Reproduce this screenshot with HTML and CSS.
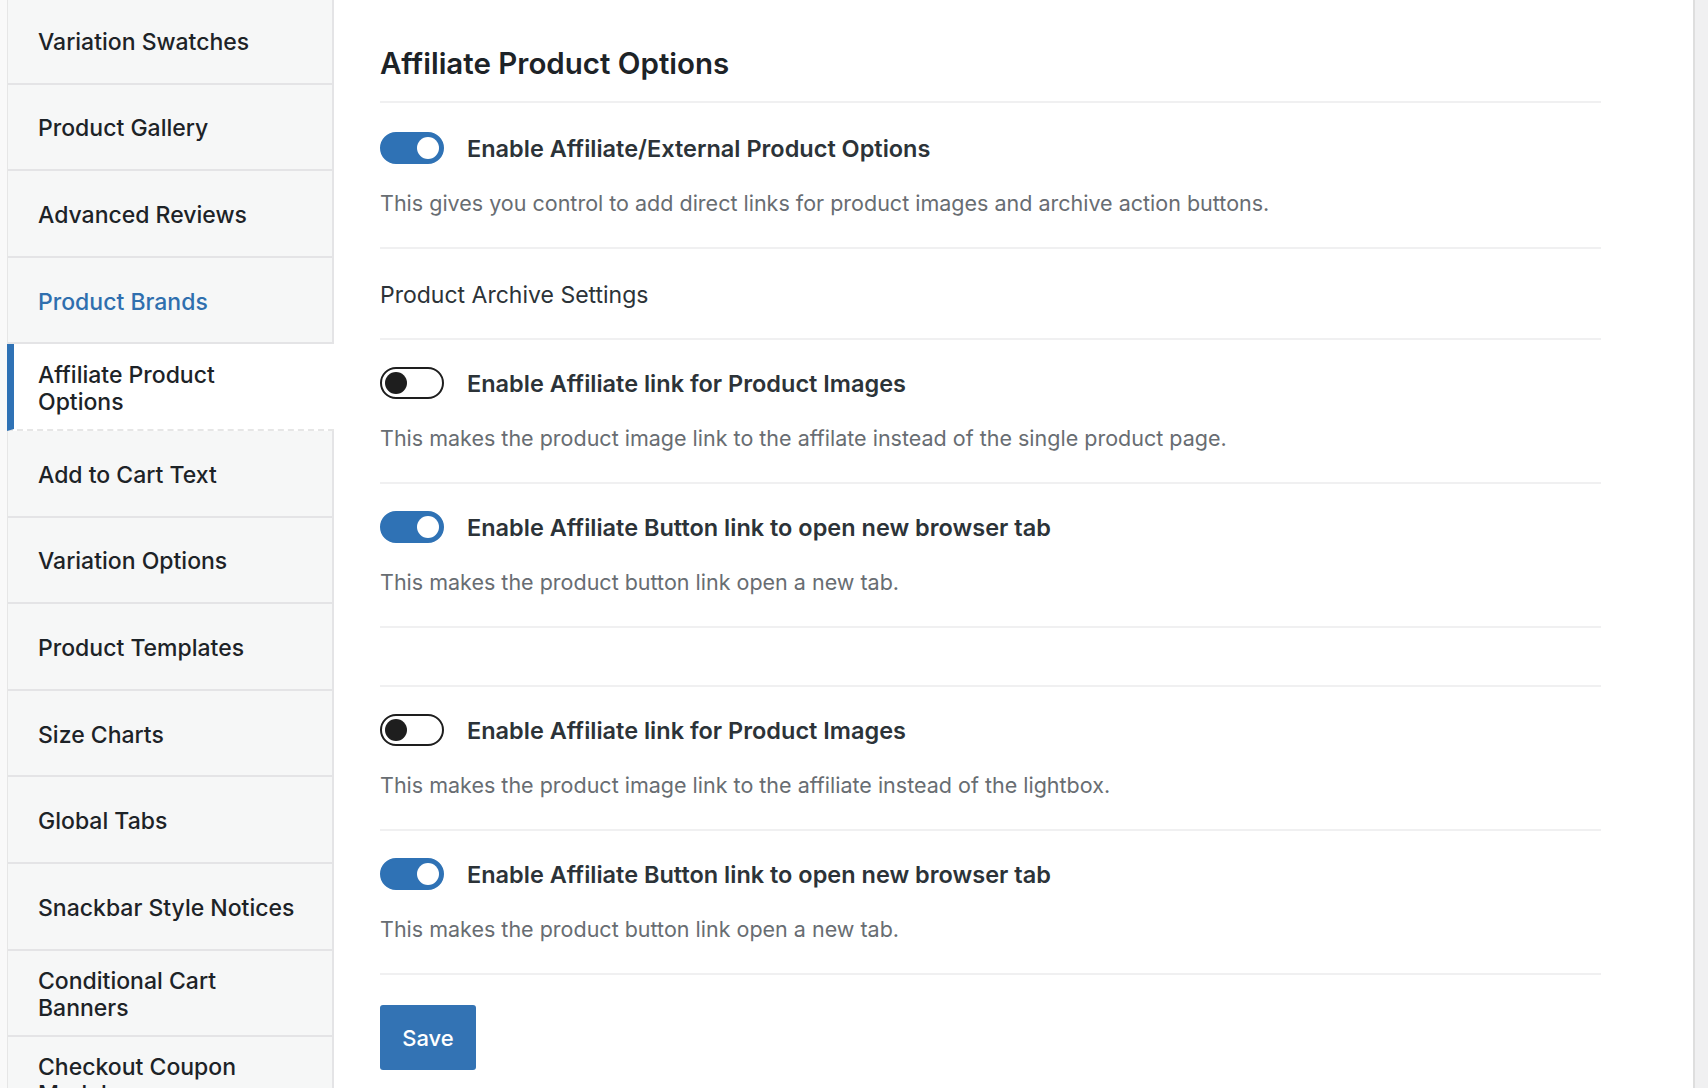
FILE: index.html
```html
<!DOCTYPE html>
<html lang="en">

<head>
    <meta charset="UTF-8">
    <meta name="viewport" content="width=device-width, initial-scale=1.0">
    <title>Affiliate Product Options</title>
    <link rel="stylesheet" href="styles.css">
</head>

<body>
    <div class="page">
        <div class="side-wrap">
            <nav class="sidebar">
                <a class="tab" href="#">Variation Swatches</a>
                <a class="tab" href="#">Product Gallery</a>
                <a class="tab" href="#">Advanced Reviews</a>
                <a class="tab tab-hover" href="#">Product Brands</a>
                <a class="tab tab-active" href="#">Affiliate Product Options</a>
                <a class="tab" href="#">Add to Cart Text</a>
                <a class="tab" href="#">Variation Options</a>
                <a class="tab" href="#">Product Templates</a>
                <a class="tab" href="#">Size Charts</a>
                <a class="tab" href="#">Global Tabs</a>
                <a class="tab" href="#">Snackbar Style Notices</a>
                <a class="tab" href="#">Conditional Cart Banners</a>
                <a class="tab" href="#">Checkout Coupon Modules</a>
            </nav>
        </div>

        <main class="panel">
            <h2 class="panel-title">Affiliate Product Options</h2>

            <div class="setting setting-first">
                <div class="setting-head">
                    <label class="switch"><input type="checkbox" checked><span class="slider"></span></label>
                    <span class="setting-label">Enable Affiliate/External Product Options</span>
                </div>
                <p class="setting-desc">This gives you control to add direct links for product images and archive action buttons.</p>
            </div>

            <div class="subhead">Product Archive Settings</div>

            <div class="setting">
                <div class="setting-head">
                    <label class="switch"><input type="checkbox"><span class="slider"></span></label>
                    <span class="setting-label">Enable Affiliate link for Product Images</span>
                </div>
                <p class="setting-desc">This makes the product image link to the affilate instead of the single product page.</p>
            </div>

            <div class="setting">
                <div class="setting-head">
                    <label class="switch"><input type="checkbox" checked><span class="slider"></span></label>
                    <span class="setting-label">Enable Affiliate Button link to open new browser tab</span>
                </div>
                <p class="setting-desc">This makes the product button link open a new tab.</p>
            </div>

            <div class="spacer"></div>

            <div class="setting">
                <div class="setting-head">
                    <label class="switch"><input type="checkbox"><span class="slider"></span></label>
                    <span class="setting-label">Enable Affiliate link for Product Images</span>
                </div>
                <p class="setting-desc">This makes the product image link to the affiliate instead of the lightbox.</p>
            </div>

            <div class="setting">
                <div class="setting-head">
                    <label class="switch"><input type="checkbox" checked><span class="slider"></span></label>
                    <span class="setting-label">Enable Affiliate Button link to open new browser tab</span>
                </div>
                <p class="setting-desc">This makes the product button link open a new tab.</p>
            </div>

            <button class="save" type="button">Save</button>
        </main>

        <div class="gutter"></div>
    </div>
</body>

</html>
```

FILE: styles.css
```css
body {
    margin: 0;
    height: 100vh;
    overflow: hidden;
    font-family: Inter, "Noto Sans", sans-serif;
    color: #1d2327;
    background-color: #f0f0f1;
}

.page {
    display: flex;
    height: 100%;
}

/*----- left tab list -----*/
.side-wrap {
    flex-shrink: 0;
    padding-left: 7px;
    background-color: #f9f9f9;
}

.sidebar {
    width: 324px;
    margin-top: -2px;
    background-color: #f6f7f7;
    border-left: 1px solid #e6e6e6;
    border-right: 2px solid #e4e4e6;
}

.tab {
    display: flex;
    align-items: center;
    box-sizing: border-box;
    height: 86.6px;
    padding: 4px 26px 0 30px;
    border-bottom: 2px solid #e4e4e6;
    font-size: 23px;
    font-weight: 500;
    line-height: 27px;
    color: #1d2327;
    text-decoration: none;
}

.tab-hover {
    color: #2f6fae;
}

.tab-active {
    margin-left: -1px;
    margin-right: -2px;
    padding-left: 24px;
    padding-right: 40px;
    border-left: 7px solid #2f72b5;
    border-bottom: 2px dashed #e6e6e6;
    background-color: #fff;
}

/*----- settings panel -----*/
.panel {
    flex: 1;
    padding: 45px 92px 0 46px;
    background-color: #fff;
    border-right: 2px solid #dedede;
}

.gutter {
    width: 13px;
    flex-shrink: 0;
}

.panel-title {
    margin: 0;
    padding-bottom: 20px;
    font-size: 29.5px;
    font-weight: 600;
    line-height: 36px;
    color: #1d2327;
    border-bottom: 2px solid #f0f0f1;
}

.setting {
    padding: 27px 0 30px;
    border-bottom: 2px solid #f0f0f1;
}

.setting-first {
    padding-top: 29px;
}

.setting-head {
    display: flex;
    align-items: center;
    gap: 23px;
    height: 32px;
}

.setting-label {
    font-size: 23.5px;
    font-weight: 600;
    color: #2c3338;
}

.setting-desc {
    margin: 25px 0 0;
    font-size: 21.5px;
    line-height: 28px;
    color: #686d72;
}

.subhead {
    padding: 32px 0 29px;
    font-size: 23px;
    line-height: 28px;
    color: #2c3338;
    border-bottom: 2px solid #f0f0f1;
}

.spacer {
    height: 57px;
    border-bottom: 2px solid #f0f0f1;
}

/*----- toggle switch -----*/
.switch {
    position: relative;
    flex-shrink: 0;
    width: 64px;
    height: 32px;
}

.switch input {
    display: none;
}

.slider {
    position: absolute;
    inset: 0;
    box-sizing: border-box;
    border: 2px solid #1e1e1e;
    border-radius: 16px;
    background-color: #fff;
    cursor: pointer;
}

.slider::before {
    content: "";
    position: absolute;
    top: 3px;
    left: 3px;
    width: 22px;
    height: 22px;
    border-radius: 50%;
    background-color: #1e1e1e;
}

.switch input:checked + .slider {
    border-color: #2f72b5;
    background-color: #2f72b5;
}

.switch input:checked + .slider::before {
    left: 35px;
    background-color: #fff;
}

.save {
    margin-top: 30px;
    width: 96px;
    height: 65px;
    border: 0;
    border-radius: 3px;
    background-color: #3373b4;
    color: #fff;
    font-family: inherit;
    font-size: 22px;
    font-weight: 500;
    cursor: pointer;
}
```
